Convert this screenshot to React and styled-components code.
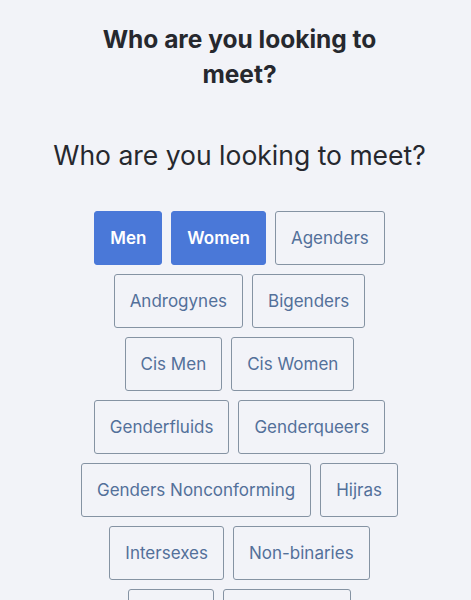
import React from "react";
import styled, { createGlobalStyle } from "styled-components";

const options = [
  { label: "Men", selected: true },
  { label: "Women", selected: true },
  { label: "Agenders" },
  { label: "Androgynes" },
  { label: "Bigenders" },
  { label: "Cis Men" },
  { label: "Cis Women" },
  { label: "Genderfluids" },
  { label: "Genderqueers" },
  { label: "Genders Nonconforming" },
  { label: "Hijras" },
  { label: "Intersexes" },
  { label: "Non-binaries" },
  { label: "Others" },
  { label: "Pangenders" },
];

const App = () => {
  return (
    <>
      <GlobalStyle />
      <Page>
        <Title>Who are you looking to meet?</Title>
        <Question>Who are you looking to meet?</Question>
        <Options>
          {options.map((o) => (
            <OptionButton key={o.label} $selected={o.selected}>
              {o.label}
            </OptionButton>
          ))}
        </Options>
      </Page>
    </>
  );
};

export default App;

const GlobalStyle = createGlobalStyle`
  body {
    margin: 0;
    background: #f2f3f8;
    font-family: Inter, "Open Sans", sans-serif;
  }
`;

const Page = styled.div`
  display: flex;
  flex-direction: column;
  align-items: center;
  padding: 22px 0 0 8px;
  height: 600px;
  box-sizing: border-box;
  overflow: hidden;
`;

const Title = styled.h1`
  margin: 0;
  max-width: 300px;
  text-align: center;
  font-size: 24.5px;
  line-height: 35px;
  font-weight: 700;
  color: #26282e;
`;

const Question = styled.h2`
  margin: 46px 0 0;
  text-align: center;
  font-size: 26.5px;
  line-height: 34px;
  font-weight: 400;
  color: #26282e;
`;

const Options = styled.div`
  margin-top: 39px;
  width: 340px;
  display: flex;
  flex-wrap: wrap;
  justify-content: center;
  gap: 9px 9px;
`;

const OptionButton = styled.button`
  height: 54px;
  padding: 0 15px;
  border-radius: 3px;
  border: 1px solid ${(p) => (p.$selected ? "#4a78d8" : "#8593a3")};
  background: ${(p) => (p.$selected ? "#4a78d8" : "transparent")};
  color: ${(p) => (p.$selected ? "#ffffff" : "#53709a")};
  font-family: Inter, "Open Sans", sans-serif;
  font-size: 17px;
  font-weight: ${(p) => (p.$selected ? 600 : 400)};
  cursor: pointer;
`;
